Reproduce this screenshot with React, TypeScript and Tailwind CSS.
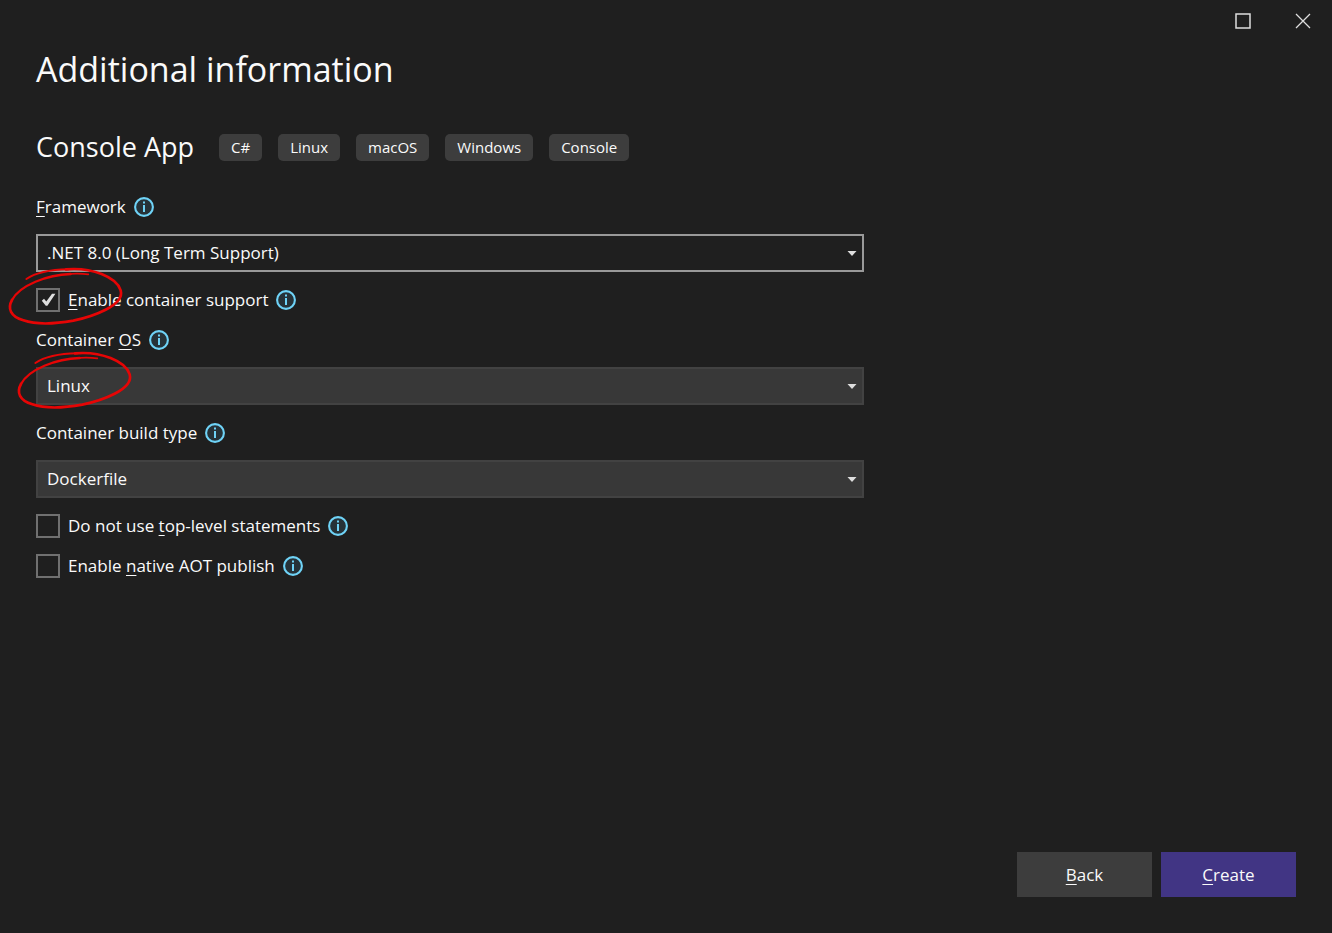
import { useState, type ReactNode } from "react"

const tags = ["C#", "Linux", "macOS", "Windows", "Console"]

function InfoIcon() {
  return (
    <svg viewBox="0 0 20 20" className="size-5 shrink-0" fill="none" aria-hidden="true">
      <circle cx="10" cy="10" r="8.9" fill="#263238" stroke="#6fd3f7" strokeWidth="2.1" />
      <path d="M10 8v7M10 4.5v2.1" stroke="#6fd3f7" strokeWidth="2" />
    </svg>
  )
}

// Hand-drawn red circle around a control
function Scribble({ className }: { className: string }) {
  return (
    <svg
      viewBox="0 0 420 225"
      className={`pointer-events-none absolute h-[75px] w-[140px] ${className}`}
      fill="none"
      stroke="#e60505"
      strokeLinecap="round"
      aria-hidden="true"
    >
      <path d="M79 57C110 36 158 29 205 28" strokeWidth="6" />
      <path d="M198 28C276 21 350 52 362 91C375 137 276 170 220 182C164 192 108 194 70 181C31 169 22 145 36 120" strokeWidth="8" />
      <path d="M36 120C59 76 142 44 212 42" strokeWidth="7" />
      <path d="M205 42C230 40 250 41 265 43" strokeWidth="5" />
    </svg>
  )
}

function Key({ children }: { children: ReactNode }) {
  return <span className="underline decoration-1 underline-offset-3">{children}</span>
}

interface SelectFieldProps {
  id: string
  label: ReactNode
  options: string[]
  focused?: boolean
  marked?: boolean
}

function SelectField({ id, label, options, focused, marked }: SelectFieldProps) {
  return (
    <div>
      <div className="flex h-10 items-center gap-2">
        <label htmlFor={id}>{label}</label>
        <InfoIcon />
      </div>
      <div className="relative mt-[7px] mb-2">
        <select
          id={id}
          className={`block h-[38px] w-full appearance-none border-2 pr-8 pl-[9px] outline-none ${
            focused ? "border-[#999999] bg-[#1f1f1f]" : "border-[#424242] bg-[#383838]"
          }`}
        >
          {options.map((option) => (
            <option key={option}>{option}</option>
          ))}
        </select>
        <svg viewBox="0 0 10 5" className="pointer-events-none absolute top-[17px] right-[7px] h-[5px] w-[10px]" aria-hidden="true">
          <path d="M0.5 0h9L5 5z" fill="#dedede" />
        </svg>
        {marked && <Scribble className="-top-[23px] -left-[27px]" />}
      </div>
    </div>
  )
}

interface CheckFieldProps {
  id: string
  label: ReactNode
  defaultChecked?: boolean
  marked?: boolean
}

function CheckField({ id, label, defaultChecked = false, marked }: CheckFieldProps) {
  const [checked, setChecked] = useState(defaultChecked)

  return (
    <div className="relative flex h-10 items-center gap-2">
      <div className="relative size-6 shrink-0">
        <input
          id={id}
          type="checkbox"
          checked={checked}
          onChange={(e) => setChecked(e.target.checked)}
          className="block size-6 appearance-none border-2 border-[#707070]"
        />
        {checked && (
          <svg viewBox="0 0 24 24" className="pointer-events-none absolute inset-0 size-6" aria-hidden="true">
            <path d="M5.8 12.8L8 10.8L10.3 13.6L16 5.8H19.4L11.4 17.8H9.8Z" fill="#dedede" />
          </svg>
        )}
      </div>
      <label htmlFor={id}>{label}</label>
      <InfoIcon />
      {marked && <Scribble className="-top-5 -left-9" />}
    </div>
  )
}

export default function App() {
  return (
    <div className="flex min-h-screen flex-col bg-[#1f1f1f] font-['Open_Sans','Noto_Sans',sans-serif] text-[17px] text-[#fafafa]">
      <header className="flex h-[42px] items-center justify-end gap-11 pr-[21px]">
        <button type="button" aria-label="Maximize" className="size-4">
          <svg viewBox="0 0 16 16" className="size-4" fill="none">
            <path d="M1 1h14v14H1z" stroke="#dedede" strokeWidth="1.5" />
          </svg>
        </button>
        <button type="button" aria-label="Close" className="size-4">
          <svg viewBox="0 0 16 16" className="size-4" fill="none">
            <path d="M1 1l14 14M15 1L1 15" stroke="#dedede" strokeWidth="1.3" />
          </svg>
        </button>
      </header>

      <main className="flex-1 px-9">
        <h1 className="text-[34px] leading-[54px]">Additional information</h1>

        <div className="mt-7 mb-[17px] flex flex-wrap items-center gap-x-[25px] gap-y-2">
          <h2 className="text-[27px] leading-[46px]">Console App</h2>
          <ul className="flex flex-wrap gap-4 text-[15px]">
            {tags.map((tag) => (
              <li key={tag} className="rounded-[5px] bg-[#3d3d3d] px-3 leading-[27px]">
                {tag}
              </li>
            ))}
          </ul>
        </div>

        <form className="max-w-[828px]">
          <SelectField id="framework" label={<><Key>F</Key>ramework</>} options={[".NET 8.0 (Long Term Support)"]} focused />
          <CheckField id="container" label={<><Key>E</Key>nable container support</>} defaultChecked marked />
          <SelectField id="os" label={<>Container <Key>O</Key>S</>} options={["Linux", "Windows"]} marked />
          <SelectField id="build" label="Container build type" options={["Dockerfile", "SDK"]} />
          <CheckField id="top-level" label={<>Do not use <Key>t</Key>op-level statements</>} />
          <CheckField id="aot" label={<>Enable <Key>n</Key>ative AOT publish</>} />
        </form>
      </main>

      <footer className="flex justify-end gap-[9px] p-9">
        <button type="button" className="h-[45px] w-[135px] bg-[#3d3d3d]">
          <Key>B</Key>ack
        </button>
        <button type="button" className="h-[45px] w-[135px] bg-[#413584]">
          <Key>C</Key>reate
        </button>
      </footer>
    </div>
  )
}
